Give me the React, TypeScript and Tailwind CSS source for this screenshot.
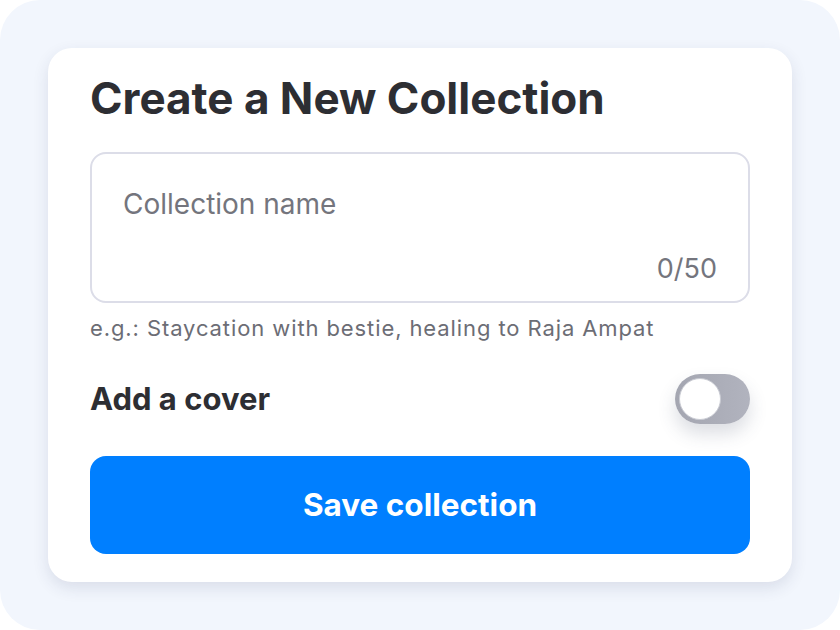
export default function App() {
  return (
    <div className="w-[840px] h-[630px] bg-white" style={{ fontFamily: "Inter, 'Noto Sans', sans-serif" }}>
      <div className="w-full h-full rounded-[40px] bg-[#f2f6fd] p-12">
        <div className="bg-white rounded-3xl shadow-[0_6px_16px_rgba(40,50,90,0.12)] px-[42px] pt-[24px] pb-[28px]">
          <h1 className="text-[44px] leading-[52px] font-bold text-[#2d2e33]">Create a New Collection</h1>

          <div className="mt-[28px] h-[151px] rounded-2xl border-2 border-[#dcdde8] flex flex-col justify-between px-[31px] pt-[33px] pb-[15px]">
            <div className="text-[28px] leading-[34px] text-[#74757d]">Collection name</div>
            <div className="text-right text-[27px] leading-[34px] text-[#74757d]">0/50</div>
          </div>

          <p className="mt-[10px] text-[22px] leading-[30px] tracking-[0.9px] text-[#6c6d75]">
            e.g.: Staycation with bestie, healing to Raja Ampat
          </p>

          <div className="mt-[31px] flex items-center justify-between">
            <span className="text-[31px] leading-[38px] font-bold text-[#2d2e33]">Add a cover</span>
            <div className="w-[75px] h-[50px] rounded-full bg-gradient-to-r from-[#a4a6b1] to-[#b1b3be] p-[4px] shadow-[0_10px_18px_rgba(60,70,100,0.18)]">
              <div className="w-[42px] h-[42px] rounded-full bg-white border border-[#c9cbd3]" />
            </div>
          </div>

          <button className="mt-8 w-full h-[98px] rounded-2xl bg-[#007fff] text-white text-[31.5px] font-bold">
            Save collection
          </button>
        </div>
      </div>
    </div>
  );
}
